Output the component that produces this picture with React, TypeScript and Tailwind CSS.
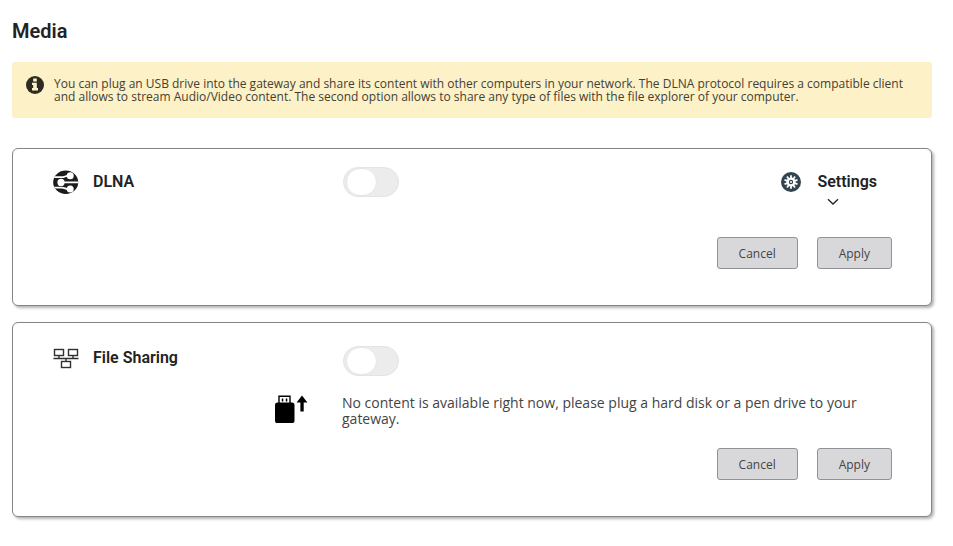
/**
 * Media: DLNA streaming and file sharing of the USB drive plugged into the gateway.
 */
import { useState } from "react";
import type { ReactNode } from "react";

function InfoIcon() {
  return (
    <svg viewBox="0 0 18 18" className="h-[18px] w-[18px] shrink-0" aria-hidden="true">
      <circle cx="9" cy="9" r="9" fill="#2d2b22" />
      <path d="M7.2 2.6h3.6v2.8H7.2zM6 6.8h4.8v5.3H12v2.4H6v-2.4h1.2V9.1H6z" fill="#fff2cb" />
    </svg>
  );
}

function DlnaIcon() {
  return (
    <svg viewBox="0 0 26 26" className="h-[26px] w-[26px] shrink-0" aria-hidden="true">
      <defs>
        <clipPath id="dlna-disc">
          <ellipse cx="12.7" cy="13.3" rx="12.5" ry="11.7" />
        </clipPath>
      </defs>
      <g clipPath="url(#dlna-disc)">
        <rect width="26" height="26" fill="#1c1c1c" />
        <g fill="none" stroke="#fff" strokeWidth="1.7">
          <path d="M0 8.2h8.6c3 0 4-1.6 7.2-1.6" />
          <path d="M8 13.4h18" />
          <path d="M0 18.6h8.6c3 0 4 1.6 7.2 1.6" />
        </g>
        <g fill="#fff">
          <circle cx="17.2" cy="6.8" r="3.5" />
          <circle cx="8" cy="13.4" r="3.6" />
          <circle cx="17.2" cy="20" r="3.5" />
        </g>
      </g>
    </svg>
  );
}

function SharingIcon() {
  return (
    <svg viewBox="0 0 26 22" className="h-[22px] w-[26px] shrink-0" fill="none" stroke="#303030" strokeWidth="1.4" aria-hidden="true">
      <rect x="1.5" y="2.5" width="9" height="6" />
      <rect x="15.5" y="2.5" width="9" height="6" />
      <rect x="8.5" y="14.5" width="9" height="6" />
      <path d="M6 8.5v3M20 8.5v3M13 11.5v3M.5 11.5h25" />
    </svg>
  );
}

function UsbIcon() {
  return (
    <svg viewBox="0 0 34 30" className="h-[30px] w-[34px] shrink-0" aria-hidden="true">
      <path d="M4 9V2.2h11V9" fill="#fff" stroke="#000" strokeWidth="1.4" />
      <path d="M6.8 4.4h1.5v3H6.8zM10.8 4.4h1.5v3h-1.5z" fill="#000" />
      <rect x="0" y="8.5" width="19.5" height="20.5" rx="2.6" fill="#000" />
      <path d="M27 1.5l5.4 7h-3.7v9h-3.3v-9h-3.8z" fill="#000" />
    </svg>
  );
}

function GearIcon() {
  return (
    <svg viewBox="0 0 20 20" className="h-5 w-5 shrink-0" aria-hidden="true">
      <circle cx="10" cy="10" r="10" fill="#31454f" />
      <circle cx="10" cy="10" r="4.6" fill="#fff" />
      <g stroke="#fff" strokeWidth="1.8">
        <path d="M10 3.2v13.6" />
        <path d="M10 3.2v13.6" transform="rotate(36 10 10)" />
        <path d="M10 3.2v13.6" transform="rotate(72 10 10)" />
        <path d="M10 3.2v13.6" transform="rotate(108 10 10)" />
        <path d="M10 3.2v13.6" transform="rotate(144 10 10)" />
      </g>
      <circle cx="10" cy="10" r="1.6" fill="#fff" stroke="#31454f" strokeWidth="1.2" />
    </svg>
  );
}

function Card({ children }: { children: ReactNode }) {
  return (
    <section className="rounded-md border border-[#858585] bg-white pr-[39px] pb-9 pl-10 shadow-[2px_2px_3px_rgba(0,0,0,0.3)]">
      {children}
    </section>
  );
}

function Toggle({ id }: { id: string }) {
  const [on, setOn] = useState(false);
  return (
    <input
      id={id}
      type="checkbox"
      role="switch"
      checked={on}
      onChange={(e) => setOn(e.target.checked)}
      className="h-[30px] w-14 cursor-pointer appearance-none rounded-full border border-[#e4e4e4] bg-[#ececec] pl-0.5 before:block before:h-7 before:w-[31px] before:rounded-full before:border before:border-[#e6e6e6] before:bg-white checked:bg-[#31454f] checked:before:ml-auto"
    />
  );
}

const BUTTON =
  "h-8 cursor-pointer rounded-[3px] border border-[#929298] bg-[#d8d8da] px-[21px] pt-0.5 text-xs text-[#444]";

function Actions() {
  return (
    <div className="flex justify-end gap-[19px]">
      <button type="button" className={BUTTON}>Cancel</button>
      <button type="button" className={BUTTON}>Apply</button>
    </div>
  );
}

const TITLE = "font-['Roboto'] text-base leading-6 font-semibold text-[#222]";

export default function App() {
  return (
    <main className="min-h-screen bg-white pt-[18px] pr-[21px] pb-6 pl-3 font-['Open_Sans',sans-serif]">
      <h1 className="font-['Roboto'] text-xl leading-[26px] font-semibold text-[#222]">Media</h1>

      <div className="mt-[18px] flex gap-2.5 rounded-[3px] bg-[#fdf1c8] pt-[14px] pr-5 pb-[14px] pl-[14px]">
        <InfoIcon />
        <p className="pt-px pb-px text-xs leading-[13px] text-[#444033]">
          You can plug an USB drive into the gateway and share its content with other computers in your network. The DLNA
          protocol requires a compatible client and allows to stream Audio/Video content. The second option allows to share
          any type of files with the file explorer of your computer.
        </p>
      </div>

      <div className="mt-[30px] flex flex-col gap-4">
        <Card>
          <div className="grid grid-cols-[290px_1fr_auto] items-start pt-[18px]">
            <label htmlFor="dlna" className={`${TITLE} flex h-[30px] items-center gap-[14px]`}>
              <DlnaIcon />
              DLNA
            </label>
            <Toggle id="dlna" />
            <button type="button" className="flex cursor-pointer gap-4 pt-[3px] pr-[15px]">
              <span className="pt-0.5">
                <GearIcon />
              </span>
              <span className={`${TITLE} text-left`}>
                Settings
                <svg viewBox="0 0 12 8" className="mt-1 ml-[10px] block h-2 w-3" fill="none" stroke="#222" strokeWidth="1.3" aria-hidden="true">
                  <path d="M1 1.3l5 4.7 5-4.7" />
                </svg>
              </span>
            </button>
          </div>
          <div className="mt-[31px]">
            <Actions />
          </div>
        </Card>

        <Card>
          <div className="grid grid-cols-[290px_1fr] items-start pt-[23px]">
            <label htmlFor="sharing" className={`${TITLE} flex items-center gap-[14px]`}>
              <SharingIcon />
              File Sharing
            </label>
            <Toggle id="sharing" />
          </div>
          <div className="mt-[18px] flex gap-[33px] pr-8 pl-[222px]">
            <UsbIcon />
            <p className="pt-px pb-px text-sm leading-4 text-[#444]">
              No content is available right now, please plug a hard disk or a pen drive to your gateway.
            </p>
          </div>
          <div className="mt-5">
            <Actions />
          </div>
        </Card>
      </div>
    </main>
  );
}
